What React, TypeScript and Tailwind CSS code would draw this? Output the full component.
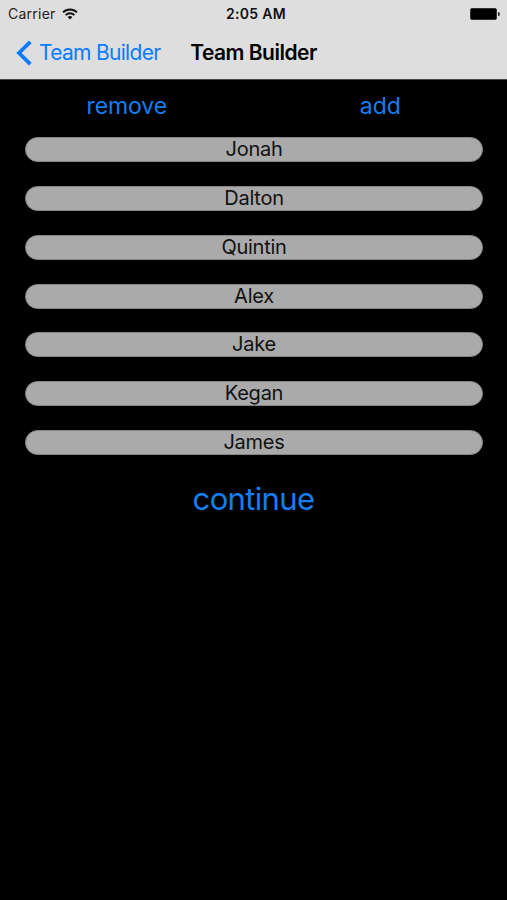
const players = ['Jonah', 'Dalton', 'Quintin', 'Alex', 'Jake', 'Kegan', 'James'];

function WifiIcon() {
  return (
    <svg className="ml-[6px] h-[12px] w-[16px]" viewBox="0 0 16 12" fill="none" stroke="#111" strokeWidth="1.9">
      <path d="M1 4.4a10 10 0 0 1 14 0" />
      <path d="M3.6 7.1a6.2 6.2 0 0 1 8.8 0" />
      <path d="M8 11.6 5.6 9.1a3.4 3.4 0 0 1 4.8 0Z" fill="#111" stroke="none" />
    </svg>
  );
}

function StatusBar() {
  return (
    <div className="grid h-[27px] grid-cols-[170px_1fr_170px] items-center">
      <div className="flex items-center pl-[8px]">
        <span className="text-[14px] leading-[27px] tracking-[0.25px] text-[#222]">Carrier</span>
        <WifiIcon />
      </div>
      <span className="pl-[5px] text-center text-[14px] leading-[27px] font-semibold tracking-[0.3px] text-[#111]">2:05 AM</span>
      <div className="flex items-center justify-end pr-[7px]">
        <div className="h-[12px] w-[27px] rounded-[2px] border border-[#333] bg-black" />
        <div className="ml-px h-[4px] w-[2px] rounded-r-full bg-[#333]" />
      </div>
    </div>
  );
}

function NavBar() {
  return (
    <nav className="grid h-[52px] grid-cols-[170px_1fr_170px] items-start">
      <button className="flex items-center pl-[16px] text-[#0a7cff]">
        <svg className="h-[26px] w-[16px]" viewBox="0 0 16 26" fill="none" stroke="currentColor" strokeWidth="3.8">
          <path d="M14.3 1.8 3 13l11.3 11.2" />
        </svg>
        <span className="ml-[7px] text-[21px] leading-[51px] tracking-[-0.7px] whitespace-nowrap">Team Builder</span>
      </button>
      <h1 className="text-center text-[21px] leading-[51px] font-semibold tracking-[-0.5px] whitespace-nowrap text-black">Team Builder</h1>
    </nav>
  );
}

export default function App() {
  return (
    <div className="flex h-[900px] w-[507px] flex-col overflow-hidden bg-black font-['Inter','Liberation_Sans',sans-serif]">
      <header className="h-[79px] bg-[#dedede]">
        <StatusBar />
        <NavBar />
      </header>
      <div className="h-px shrink-0 bg-[#444]" />
      <div className="grid h-[57.2px] grid-cols-2 items-start text-[23px] leading-[53px] tracking-[-0.1px] text-[#147ef0]">
        <button className="text-center">remove</button>
        <button className="text-center">add</button>
      </div>
      <ul className="flex flex-col gap-[23.8px] pr-[24px] pl-[25px]">
        {players.map((name) => (
          <li key={name} className="h-[25px] rounded-full border border-[#858585] bg-[#aaa] text-center text-[20px] leading-[23px] tracking-[-0.25px] text-[#111]">
            {name}
          </li>
        ))}
      </ul>
      <button className="mt-[20.5px] text-center text-[31px] leading-[48px] tracking-[-0.65px] text-[#147ef0]">continue</button>
    </div>
  );
}
